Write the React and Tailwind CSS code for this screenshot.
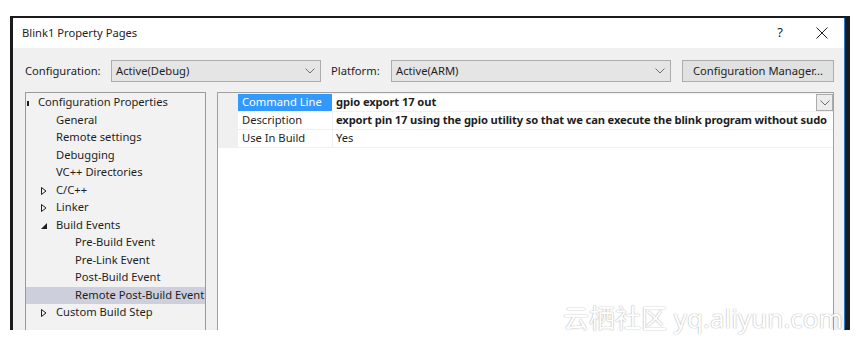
import React from 'react'

const Chevron = ({ className = '' }) => (
  <svg width="10" height="6" viewBox="0 0 10 6" className={className}>
    <path d="M0.5 0.5 L5 5 L9.5 0.5" fill="none" stroke="#707070" strokeWidth="1" />
  </svg>
)

const Collapsed = () => (
  <svg width="6" height="8" viewBox="0 0 6 8">
    <path d="M0.5 0.5 L5 4 L0.5 7.5 Z" fill="none" stroke="#1e1e1e" strokeWidth="1" />
  </svg>
)

const Expanded = () => (
  <svg width="6" height="6" viewBox="0 0 6 6">
    <path d="M6 0 L6 6 L0 6 Z" fill="#1e1e1e" />
  </svg>
)

const tree = [
  { label: 'Configuration Properties', pad: 'pl-[12px]', mark: true },
  { label: 'General', pad: 'pl-[30px]' },
  { label: 'Remote settings', pad: 'pl-[30px]' },
  { label: 'Debugging', pad: 'pl-[30px]' },
  { label: 'VC++ Directories', pad: 'pl-[30px]' },
  { label: 'C/C++', pad: 'pl-[30px]', arrow: 'closed' },
  { label: 'Linker', pad: 'pl-[30px]', arrow: 'closed' },
  { label: 'Build Events', pad: 'pl-[30px]', arrow: 'open' },
  { label: 'Pre-Build Event', pad: 'pl-[49px]' },
  { label: 'Pre-Link Event', pad: 'pl-[49px]' },
  { label: 'Post-Build Event', pad: 'pl-[49px]' },
  { label: 'Remote Post-Build Event', pad: 'pl-[49px]', selected: true },
  { label: 'Custom Build Step', pad: 'pl-[30px]', arrow: 'closed' },
]

function TreeRow({ item }) {
  return (
    <div className={`relative h-[17.5px] flex items-center whitespace-nowrap ${item.pad} ${item.selected ? 'bg-[#cdd0dc]' : ''}`}>
      {item.mark && <span className="absolute left-[1px] top-[7px] w-[2px] h-[5px] bg-[#1e1e1e]" />}
      {item.arrow === 'closed' && <span className="absolute left-[15px] top-[5px] flex"><Collapsed /></span>}
      {item.arrow === 'open' && <span className="absolute left-[15px] top-[6px] flex"><Expanded /></span>}
      {item.label}
    </div>
  )
}

function Dropdown({ width, value }) {
  return (
    <div className={`${width} h-[22px] bg-[#e5e5e5] border border-[#acacac] flex items-center justify-between pl-[4px] pr-[5px]`}>
      <span>{value}</span>
      <Chevron />
    </div>
  )
}

export default function App() {
  return (
    <div className="relative w-[857px] h-[343px] bg-white overflow-hidden text-[11.2px] text-[#1e1e1e] font-['Noto_Sans',sans-serif]">
      <div className="ml-[10px] mt-[16px] w-[840px] h-[314px] bg-[#1b1b1c] pt-[2px] pl-[3px] pr-[5px]">
        <div className="w-[832px] h-[312px] flex flex-col border-r border-[#2a7bd0] overflow-hidden">
          {/* title bar */}
          <div className="h-[30px] bg-white flex items-center pl-[9px] shrink-0">
            <span className="flex-1">Blink1 Property Pages</span>
            <span className="w-[20px] text-center text-[13px] mr-[26px]">?</span>
            <svg width="12" height="12" viewBox="0 0 12 12" className="mr-[16px]">
              <path d="M0.5 0.5 L11.5 11.5 M11.5 0.5 L0.5 11.5" stroke="#1e1e1e" strokeWidth="1" />
            </svg>
          </div>

          {/* body */}
          <div className="flex-1 bg-[#f0f0f0] pl-[12px] pr-[10px] pt-[12px] overflow-hidden">
            <div className="h-[22px] flex items-center">
              <span className="w-[86px] shrink-0">Configuration:</span>
              <Dropdown width="w-[210px]" value="Active(Debug)" />
              <span className="w-[60px] ml-[10px] shrink-0">Platform:</span>
              <Dropdown width="w-[280px]" value="Active(ARM)" />
              <div className="ml-[11px] w-[152px] h-[22px] bg-[#e1e1e1] border border-[#adadad] flex items-center justify-center">
                Configuration Manager...
              </div>
            </div>

            <div className="mt-[10px] flex gap-[11px] h-[260px]">
              {/* tree */}
              <div className="w-[181px] shrink-0 bg-[#f2f2f2] border border-[#9a9a9a] pt-[1px]">
                {tree.map(item => <TreeRow key={item.label} item={item} />)}
              </div>

              {/* property grid */}
              <div className="w-[617px] shrink-0 bg-white border border-[#a0a0a0] overflow-hidden">
                <div className="bg-[#f0f0f0] pt-[1px] pl-[20px]">
                  <div className="flex h-[17px] bg-white">
                    <div className="w-[94px] shrink-0 bg-[#3399ff] text-white pl-[4px] flex items-center">Command Line</div>
                    <div className="flex-1 flex items-center justify-between pl-[4px] font-bold tracking-[-0.1px]">
                      <span>gpio export 17 out</span>
                      <div className="w-[17px] h-[17px] bg-[#ececec] border border-[#acacac] flex items-center justify-center">
                        <Chevron />
                      </div>
                    </div>
                  </div>
                  <div className="flex h-[18px] bg-white border-t border-[#f0f0f0]">
                    <div className="w-[94px] shrink-0 pl-[4px] flex items-center">Description</div>
                    <div className="flex-1 border-l border-[#f0f0f0] pl-[3px] flex items-center font-bold whitespace-nowrap tracking-[-0.14px]">
                      export pin 17 using the gpio utility so that we can execute the blink program without sudo
                    </div>
                  </div>
                  <div className="flex h-[19px] bg-white border-y border-[#f0f0f0]">
                    <div className="w-[94px] shrink-0 pl-[4px] flex items-center">Use In Build</div>
                    <div className="flex-1 border-l border-[#f0f0f0] pl-[3px] flex items-center">Yes</div>
                  </div>
                </div>
              </div>
            </div>
          </div>
        </div>
      </div>

      {/* watermark */}
      <div className="absolute left-[563px] top-[302px] text-[26px] leading-[32px] text-white whitespace-nowrap font-['Noto_Sans','Noto_Sans_CJK_SC',sans-serif] [text-shadow:0_0_1px_rgba(0,0,0,0.35),0_0_2px_rgba(0,0,0,0.15)]">
        云栖社区 yq.aliyun.com
      </div>
    </div>
  )
}
